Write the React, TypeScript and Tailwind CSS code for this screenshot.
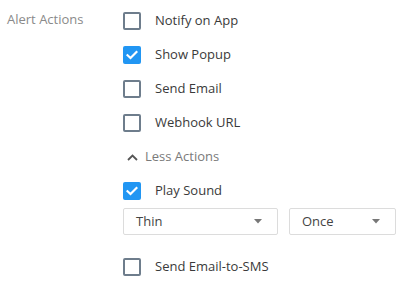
import React, { useState } from 'react';

const font = { fontFamily: '"Open Sans", "Noto Sans", sans-serif' };

// Square checkbox with blue fill when checked
const Check: React.FC<{ checked?: boolean }> = ({ checked }) =>
  checked ? (
    <span className="flex h-[18px] w-[18px] items-center justify-center rounded-[2px] bg-[#2196f3]">
      <svg width="12" height="10" viewBox="0 0 12 10" fill="none">
        <path d="M1.5 5.2 4.5 8 10.5 2" stroke="#fff" strokeWidth="2.2" strokeLinecap="square" />
      </svg>
    </span>
  ) : (
    <span className="h-[18px] w-[18px] rounded-[2px] border-2 border-[#6e7d8c] bg-white" />
  );

const CheckRow: React.FC<{ label: string; checked?: boolean }> = ({ label, checked }) => (
  <div className="flex h-[34px] items-center">
    <Check checked={checked} />
    <span className="ml-[14px] text-[13px] text-[#3a3a3a]">{label}</span>
  </div>
);

const Select: React.FC<{ value: string; className: string }> = ({ value, className }) => (
  <div className={`flex h-[27px] items-center justify-between rounded-[2px] border border-[#dcdcdc] bg-white pl-[12px] pr-[15px] ${className}`}>
    <span className="text-[13px] text-[#444]">{value}</span>
    <svg width="8" height="5" viewBox="0 0 8 5">
      <path d="M0 0h8L4 4.5z" fill="#777" />
    </svg>
  </div>
);

export default function App() {
  const [open] = useState(true);

  return (
    <div className="flex h-[286px] w-[409px] bg-white pt-[4px]" style={font}>
      <div className="w-[123px] shrink-0 pl-[7px]">
        <div className="flex h-[32px] items-center text-[13px] text-[#8a8a8a]">Alert Actions</div>
      </div>
      <div className="flex flex-col">
        <CheckRow label="Notify on App" />
        <CheckRow label="Show Popup" checked />
        <CheckRow label="Send Email" />
        <CheckRow label="Webhook URL" />
        <div className="flex h-[34px] items-center pl-[4px]">
          <svg width="11" height="7" viewBox="0 0 11 7" fill="none">
            <path d="M1 6 5.5 1.5 10 6" stroke="#555" strokeWidth="1.8" />
          </svg>
          <span className="ml-[7px] text-[13px] text-[#7a7a7a]">{open ? 'Less Actions' : 'More Actions'}</span>
        </div>
        <CheckRow label="Play Sound" checked />
        <div className="flex gap-[11px]">
          <Select value="Thin" className="w-[155px]" />
          <Select value="Once" className="w-[107px]" />
        </div>
        <div className="mt-[15px]">
          <CheckRow label="Send Email-to-SMS" />
        </div>
      </div>
    </div>
  );
}
